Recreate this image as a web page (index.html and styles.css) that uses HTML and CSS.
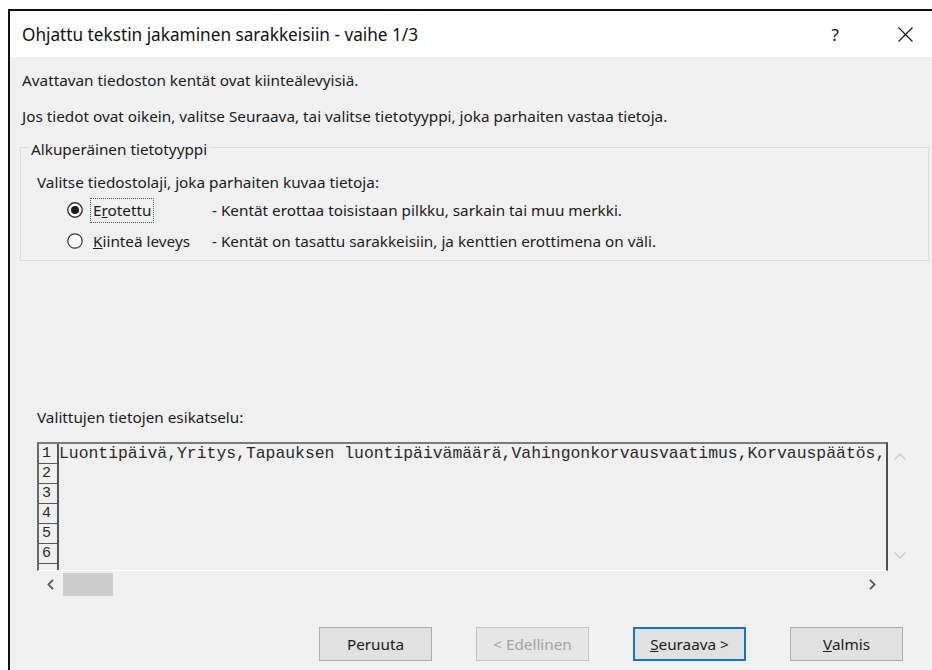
FILE: index.html
```html
<!DOCTYPE html>
<html lang="fi">
<head>
<meta charset="utf-8">
<title>Ohjattu tekstin jakaminen sarakkeisiin</title>
<link rel="stylesheet" href="styles.css">
</head>
<body>
<div class="dialog">
  <div class="titlebar">
    <span class="title">Ohjattu tekstin jakaminen sarakkeisiin - vaihe 1/3</span>
    <span class="help">?</span>
    <svg class="close" width="15" height="15" viewBox="0 0 15 15" aria-label="Sulje">
      <path d="M0.5 0.5 L14.5 14.5 M14.5 0.5 L0.5 14.5" stroke="#111" stroke-width="1.1" fill="none"/>
    </svg>
  </div>

  <div class="content">
    <p class="intro first">Avattavan tiedoston kentät ovat kiinteälevyisiä.</p>
    <p class="intro second">Jos tiedot ovat oikein, valitse Seuraava, tai valitse tietotyyppi, joka parhaiten vastaa tietoja.</p>

    <fieldset class="group">
      <legend>Alkuperäinen tietotyyppi</legend>
      <div class="prompt">Valitse tiedostolaji, joka parhaiten kuvaa tietoja:</div>

      <div class="option">
        <svg class="radio" width="16" height="16" viewBox="0 0 16 16">
          <circle cx="8" cy="8" r="7.2" fill="#fff" stroke="#333" stroke-width="1.4"/>
          <circle cx="8" cy="8" r="4" fill="#1c1c1c"/>
        </svg>
        <span class="opt-cell"><span class="opt-label focused">E<u>r</u>otettu</span></span>
        <span class="opt-desc">- Kentät erottaa toisistaan pilkku, sarkain tai muu merkki.</span>
      </div>

      <div class="option">
        <svg class="radio" width="16" height="16" viewBox="0 0 16 16">
          <circle cx="8" cy="8" r="7.2" fill="#fff" stroke="#333" stroke-width="1.2"/>
        </svg>
        <span class="opt-cell"><span class="opt-label"><u>K</u>iinteä leveys</span></span>
        <span class="opt-desc">- Kentät on tasattu sarakkeisiin, ja kenttien erottimena on väli.</span>
      </div>
    </fieldset>

    <div class="preview-label">Valittujen tietojen esikatselu:</div>

    <div class="preview">
      <div class="listbox">
        <div class="linenos">
          <div class="lineno">1</div>
          <div class="lineno">2</div>
          <div class="lineno">3</div>
          <div class="lineno">4</div>
          <div class="lineno">5</div>
          <div class="lineno">6</div>
          <div class="lineno"></div>
        </div>
        <div class="lines">
          <div class="line">Luontipäivä,Yritys,Tapauksen luontipäivämäärä,Vahingonkorvausvaatimus,Korvauspäätös,</div>
        </div>
      </div>

      <div class="vscroll">
        <svg width="12" height="7" viewBox="0 0 12 7"><path d="M0.8 6.3 L6 1.1 L11.2 6.3" stroke="#c6c6c6" stroke-width="1.3" fill="none"/></svg>
        <svg width="12" height="7" viewBox="0 0 12 7"><path d="M0.8 0.7 L6 5.9 L11.2 0.7" stroke="#c6c6c6" stroke-width="1.3" fill="none"/></svg>
      </div>

      <div class="hscroll">
        <svg width="7" height="11" viewBox="0 0 7 11"><path d="M6 0.8 L1.5 5.5 L6 10.2" stroke="#555" stroke-width="1.8" fill="none"/></svg>
        <div class="thumb"></div>
        <div class="track"></div>
        <svg width="7" height="11" viewBox="0 0 7 11"><path d="M1 0.8 L5.5 5.5 L1 10.2" stroke="#555" stroke-width="1.8" fill="none"/></svg>
      </div>
    </div>

    <div class="buttons">
      <button class="btn" type="button">Peruuta</button>
      <button class="btn" type="button" disabled>&lt; Edellinen</button>
      <button class="btn default" type="button"><u>S</u>euraava &gt;</button>
      <button class="btn" type="button"><u>V</u>almis</button>
    </div>
  </div>
</div>
</body>
</html>
```

FILE: styles.css
```css
* {
  box-sizing: border-box;
}

html,
body {
  margin: 0;
  padding: 0;
  background: #fff;
  overflow: hidden;
}

body {
  height: 670px;
  font-family: "Noto Sans", "Segoe UI", sans-serif;
  font-size: 15.3px;
  color: #1b1b1b;
}

/* window frame: continues past the right and bottom edges of the view */
.dialog {
  display: flex;
  flex-direction: column;
  width: 924px;
  height: 661px;
  margin: 9px 0 0 8px;
  border: 2px solid #111;
  border-right: none;
  border-bottom: none;
}

.titlebar {
  display: flex;
  align-items: center;
  flex: none;
  height: 46px;
  padding: 0 19px 0 12px;
  background: #fff;
}

.title {
  flex: 1;
  font-size: 17.2px;
  color: #111;
}

.help {
  margin-right: 59px;
  font-size: 17px;
  color: #111;
}

.close {
  display: block;
}

.content {
  flex: 1;
  padding: 0 0 0 10px;
  background: #f0f0f0;
}

.intro {
  margin: 0;
  padding-left: 2px;
  line-height: 20px;
}

.intro.first {
  margin-top: 13px;
}

.intro.second {
  margin-top: 16px;
}

/* "Alkuperäinen tietotyyppi" group */
.group {
  width: 909px;
  margin: 9px 0 0 0;
  padding: 0 0 6px 0;
  border: 1px solid #dadada;
}

.group legend {
  margin-left: 8px;
  padding: 4px 2px 0;
  line-height: 20px;
}

.prompt {
  margin: 13px 0 0 16px;
  line-height: 20px;
}

.option {
  display: flex;
  align-items: center;
  height: 26px;
  margin: 5px 0 0 46px;
}

.radio {
  flex: none;
  margin-right: 7px;
}

.opt-cell {
  flex: none;
  width: 122px;
}

.opt-label {
  display: inline-block;
  padding: 0 2px;
  line-height: 23px;
  border: 1px dotted transparent;
}

.opt-label.focused {
  border-color: #555;
}

.opt-desc {
  white-space: nowrap;
}

/* data preview */
.preview-label {
  margin: 146px 0 0 17px;
  line-height: 20px;
}

.preview {
  display: grid;
  grid-template-columns: 851px 24px;
  grid-template-rows: 129px 26px;
  margin: 15px 0 0 17px;
}

.listbox {
  display: flex;
  overflow: hidden;
  border-top: 2px solid #7a7a7a;
  border-left: 2px solid #6a6a6a;
  border-right: 2px solid #4f4f4f;
  border-bottom: 1px solid #fff;
  background: #f0f0f0;
  font-family: "Liberation Mono", "Courier New", monospace;
  color: #2a2a2a;
}

.linenos {
  flex: none;
  width: 20px;
  border-right: 2px solid #555;
}

.lineno {
  height: 20px;
  padding-left: 3px;
  line-height: 19px;
  font-size: 15px;
  border-bottom: 1px solid #555;
}

.lines {
  flex: 1;
  min-width: 0;
  overflow: hidden;
}

.line {
  height: 19px;
  line-height: 19px;
  font-size: 16.4px;
  white-space: nowrap;
}

.vscroll {
  display: flex;
  flex-direction: column;
  justify-content: space-between;
  align-items: center;
  padding: 11px 0 12px;
}

.hscroll {
  display: flex;
  align-items: center;
  padding: 0 12px 0 10px;
}

.hscroll svg {
  flex: none;
}

.thumb {
  flex: none;
  width: 50px;
  height: 23px;
  margin-left: 9px;
  background: #cdcdcd;
}

.track {
  flex: 1;
}

/* command buttons */
.buttons {
  display: flex;
  justify-content: flex-end;
  gap: 44px;
  margin: 30px 29px 0 0;
}

.btn {
  width: 113px;
  height: 34px;
  padding: 0;
  font-family: "Noto Sans", "Segoe UI", sans-serif;
  font-size: 15.3px;
  color: #1b1b1b;
  background: #e1e1e1;
  border: 1px solid #adadad;
  border-radius: 0;
}

.btn:disabled {
  color: #a3a3a3;
  background: #e6e6e6;
  border-color: #c4c4c4;
}

.btn.default {
  border: 2px solid #0a78d4;
}
```
